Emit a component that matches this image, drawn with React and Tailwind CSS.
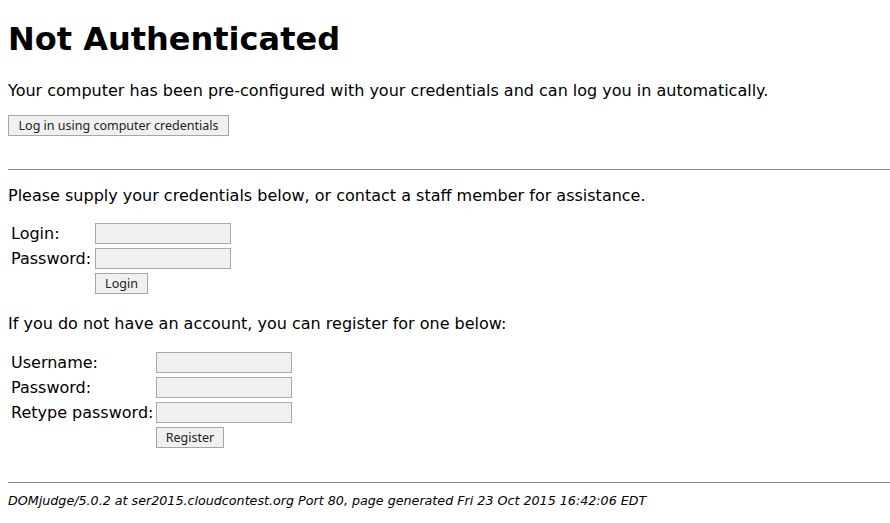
export default function App() {
  const btn =
    "h-[21px] border border-[#a6a6a6] bg-[#f0f0f0] text-[12.5px] leading-[19px] text-[#222] text-center [font-family:'Noto_Sans',sans-serif]";
  const input = "h-[21px] w-[136px] border border-[#a9a9a9] bg-[#f0f0f0]";
  return (
    <div className="min-h-[523px] bg-white pl-[8px] text-black text-[16px] [font-family:'DejaVu_Sans',sans-serif]">
      <div className="h-[21px]" />
      <h1 className="text-[32px] font-bold leading-[37px]">Not Authenticated</h1>
      <p className="mt-[23px] leading-[19px]">
        Your computer has been pre-configured with your credentials and can log you in automatically.
      </p>
      <div className="mt-[13px]">
        <button className={btn + " w-[221px]"}>Log in using computer credentials</button>
      </div>
      <div className="mt-[32px] h-px bg-[#8a8a8a]" />
      <p className="mt-[16px] leading-[19px]">
        Please supply your credentials below, or contact a staff member for assistance.
      </p>
      <div className="mt-[18px] flex flex-col gap-[4px]">
        <div className="flex items-center">
          <div className="w-[87px] pl-[3px] leading-[19px]">Login:</div>
          <div className={input} />
        </div>
        <div className="flex items-center">
          <div className="w-[87px] pl-[3px] leading-[19px]">Password:</div>
          <div className={input} />
        </div>
        <div className="flex items-center">
          <div className="w-[87px]" />
          <button className={btn + " w-[53px]"}>Login</button>
        </div>
      </div>
      <p className="mt-[20px] leading-[19px]">
        If you do not have an account, you can register for one below:
      </p>
      <div className="mt-[19px] flex flex-col gap-[4px]">
        <div className="flex items-center">
          <div className="w-[148px] pl-[3px] leading-[19px]">Username:</div>
          <div className={input} />
        </div>
        <div className="flex items-center">
          <div className="w-[148px] pl-[3px] leading-[19px]">Password:</div>
          <div className={input} />
        </div>
        <div className="flex items-center">
          <div className="w-[148px] pl-[3px] leading-[19px]">Retype password:</div>
          <div className={input} />
        </div>
        <div className="flex items-center">
          <div className="w-[148px]" />
          <button className={btn + " w-[68px]"}>Register</button>
        </div>
      </div>
      <div className="mt-[34px] h-px bg-[#8a8a8a]" />
      <p className="mt-[10px] text-[12.7px] italic leading-[16px]">
        DOMjudge/5.0.2 at ser2015.cloudcontest.org Port 80, page generated Fri 23 Oct 2015 16:42:06 EDT
      </p>
    </div>
  );
}
